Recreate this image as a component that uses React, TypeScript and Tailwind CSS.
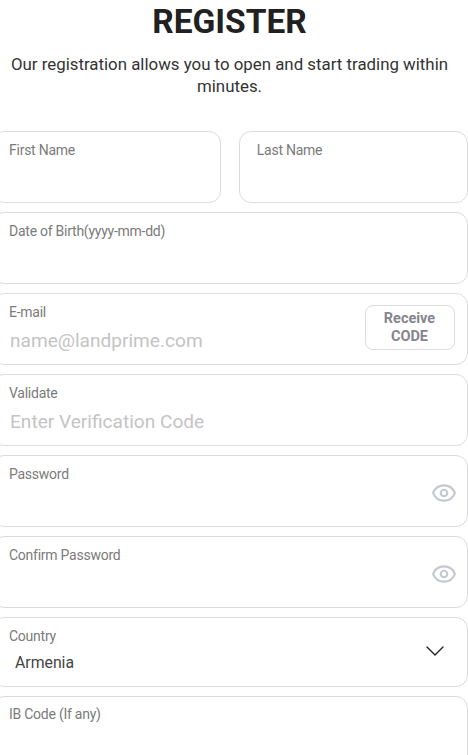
import { Eye, ChevronDown } from "lucide-react";

function Field({ label, placeholder, children, h = "h-[72px]", className = "pl-[16px] pt-[8px]" }: { label: string; placeholder?: string; children?: React.ReactNode; h?: string; className?: string }) {
  return (
    <div className={`relative ${h} shrink-0 rounded-[12px] border border-[#dcdcdc] ${className}`}>
      <div className="text-[14px] leading-[20px] tracking-[-0.25px] text-[#7b7b7b]">{label}</div>
      {placeholder && <div className="mt-[6px] ml-px text-[19.1px] leading-[26px] text-[#c4c4c4]">{placeholder}</div>}
      {children}
    </div>
  );
}

function EyeIcon() {
  return <Eye className="absolute right-[10px] top-[24px] h-[26px] w-[26px] text-[#c5c8d0]" strokeWidth={2} />;
}

export default function App() {
  return (
    <div className="h-[755px] w-[468px] overflow-hidden bg-white font-['Roboto',sans-serif]">
      <div className="w-[459px]">
        <h1 className="pt-[2px] text-center text-[33.5px] leading-[40px] font-bold text-[#212121]">REGISTER</h1>
        <p className="mt-[11px] text-center text-[16.85px] leading-[22px] text-[#333333]">
          Our registration allows you to open and start trading within minutes.
        </p>
      </div>
      <div className="mt-[34px] ml-[-8px] flex w-[475.5px] flex-col gap-[9px]">
        <div className="flex gap-[18px]">
          <div className="flex-1">
            <Field label="First Name" />
          </div>
          <div className="flex-1">
            <Field label="Last Name" className="pl-[17px] pt-[8px]" />
          </div>
        </div>
        <Field label="Date of Birth(yyyy-mm-dd)" />
        <Field label="E-mail" placeholder="name@landprime.com">
          <button className="absolute top-[11px] right-[12px] h-[45px] w-[90px] rounded-[8px] border border-[#dcdcdc] text-[14.5px] leading-[18px] font-bold text-[#85858c]">
            Receive CODE
          </button>
        </Field>
        <Field label="Validate" placeholder="Enter Verification Code" />
        <Field label="Password">
          <EyeIcon />
        </Field>
        <Field label="Confirm Password">
          <EyeIcon />
        </Field>
        <Field label="Country" h="h-[70px]">
          <div className="mt-[6px] ml-[6px] text-[15.8px] leading-[22px] text-[#444]">Armenia</div>
          <ChevronDown className="absolute top-[17px] right-[16px] h-[32px] w-[32px] text-[#222]" strokeWidth={1} />
        </Field>
        <Field label="IB Code (If any)" className="pl-[16px] pt-[7px]" />
      </div>
    </div>
  );
}
